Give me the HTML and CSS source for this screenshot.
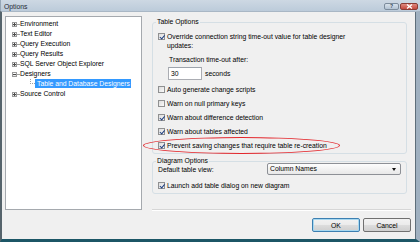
FILE: index.html
```html
<html lang="en">
<head>
  <meta charset="UTF-8" />
  <title>Options</title>
  <link rel="stylesheet" href="styles.css">
</head>
<body>
  <div class="window">
    <div class="titlebar">
      <span class="title">Options</span>
      <div class="caption">
        <span class="cap-btn cap-help">?</span>
        <span class="cap-btn cap-close">
          <svg width="7" height="5" viewBox="0 0 7 5"><path d="M1 0.5 L6 4.5 M6 0.5 L1 4.5" stroke="#fff" stroke-width="1.3"/></svg>
        </span>
      </div>
    </div>

    <div class="client">
      <!-- left tree -->
      <div class="tree">
        <div class="node"><span class="exp plus"></span><span class="dots"></span><span class="label">Environment</span></div>
        <div class="node"><span class="exp plus"></span><span class="dots"></span><span class="label">Text Editor</span></div>
        <div class="node"><span class="exp plus"></span><span class="dots"></span><span class="label">Query Execution</span></div>
        <div class="node"><span class="exp plus"></span><span class="dots"></span><span class="label">Query Results</span></div>
        <div class="node"><span class="exp plus"></span><span class="dots"></span><span class="label">SQL Server Object Explorer</span></div>
        <div class="node"><span class="exp"></span><span class="dots"></span><span class="label">Designers</span></div>
        <div class="node child"><span class="branch"></span><span class="label selected">Table and Database Designers</span></div>
        <div class="node"><span class="exp plus"></span><span class="dots"></span><span class="label">Source Control</span></div>
      </div>

      <!-- right options pane -->
      <div class="pane">
        <fieldset class="group table-opts">
          <legend>Table Options</legend>
          <div class="cb-row wrap"><span class="cb on"></span><span>Override connection string time-out value for table designer<br>updates:</span></div>
          <div class="sub-label">Transaction time-out after:</div>
          <div class="timeout-row"><span class="textbox">30</span><span class="unit">seconds</span></div>
          <div class="cb-row first"><span class="cb"></span><span>Auto generate change scripts</span></div>
          <div class="cb-row"><span class="cb"></span><span>Warn on null primary keys</span></div>
          <div class="cb-row"><span class="cb on"></span><span>Warn about difference detection</span></div>
          <div class="cb-row"><span class="cb on"></span><span>Warn about tables affected</span></div>
          <div class="cb-row"><span class="cb on"></span><span>Prevent saving changes that require table re-creation</span></div>
        </fieldset>

        <fieldset class="group diagram-opts">
          <legend>Diagram Options</legend>
          <div class="view-row">
            <span class="view-label">Default table view:</span>
            <span class="combo">Column Names<span class="arrow"></span></span>
          </div>
          <div class="cb-row launch"><span class="cb on"></span><span>Launch add table dialog on new diagram</span></div>
        </fieldset>

        <div class="separator"></div>

        <div class="buttons">
          <button type="button" class="btn default">OK</button>
          <button type="button" class="btn">Cancel</button>
        </div>

        <div class="highlight-ring"></div>
      </div>
    </div>
  </div>
</body>
</html>
```

FILE: styles.css
```css
body {
  margin: 0;
  padding: 0;
  font-family: 'Liberation Sans', Arial, sans-serif;
  font-size: 6.8px;
  color: #000;
  background-color: #fff;
}

.window {
  width: 420px;
  height: 242px;
  display: flex;
  flex-direction: column;
  overflow: hidden;
}

.titlebar {
  height: 11px;
  flex: none;
  display: flex;
  align-items: flex-start;
  background: linear-gradient(#cdd8e3, #bccbda);
  border-left: 1px solid #97a7b7;
}

.title {
  margin-left: 3px;
  line-height: 13px;
  color: #1e2a36;
}

.caption {
  margin-left: auto;
  margin-top: 3px;
  margin-right: 2px;
  display: flex;
  gap: 1px;
}

.cap-btn {
  height: 7px;
  border: 1px solid #7c8c9c;
  border-radius: 2px;
  box-sizing: border-box;
  display: flex;
  align-items: center;
  justify-content: center;
  font-size: 5px;
  font-weight: bold;
  line-height: 5px;
}

.cap-help {
  width: 15px;
  color: #2e3e4e;
  background: linear-gradient(#d8e2ec, #b3c3d3);
}

.cap-close {
  width: 18px;
  border-color: #8a3c36;
  background: linear-gradient(#e08a80, #c4483e);
}

.client {
  flex: 1;
  display: flex;
  align-items: flex-start;
  background-color: #f0f0f0;
  border-top: 1px solid #a9b7c5;
  border-left: 2px solid #56646c;
  border-right: 4px solid #9fb0c0;
  border-bottom: 3px solid #1c5666;
  padding-left: 3px;
  box-shadow: inset -1px 0 0 #5e6e7a;
}

/* tree */

.tree {
  width: 137px;
  height: 194px;
  margin-top: 4px;
  box-sizing: border-box;
  background-color: #fff;
  border: 1px solid #a5a9ae;
  padding-top: 2px;
  padding-left: 6px;
}

.node {
  height: 10px;
  display: flex;
  align-items: center;
  white-space: nowrap;
}

.exp {
  width: 5px;
  height: 5px;
  box-sizing: border-box;
  border: 1px solid #9a9a9a;
  background: linear-gradient(#ffffff, #e4e4e4);
  position: relative;
}

.exp::before {
  content: "";
  position: absolute;
  left: 0;
  top: 1px;
  width: 3px;
  height: 1px;
  background-color: #4a4a4a;
}

.exp.plus::after {
  content: "";
  position: absolute;
  left: 1px;
  top: 0;
  width: 1px;
  height: 3px;
  background-color: #4a4a4a;
}

.dots {
  width: 2px;
  height: 0;
  border-top: 1px dotted #a0a0a0;
  margin-right: 1px;
}

.label {
  line-height: 10px;
}

.child {
  padding-left: 18px;
  align-items: stretch;
}

.branch {
  width: 5px;
  height: 5px;
  box-sizing: border-box;
  border-left: 1px dotted #a0a0a0;
  border-bottom: 1px dotted #a0a0a0;
}

.selected {
  background-color: #3399ff;
  color: #fff;
  padding: 0 1px 0 2px;
  line-height: 9px;
  margin-top: 0;
  height: 9px;
}

/* options pane */

.pane {
  width: 260px;
  height: 221px;
  margin-top: 6px;
  margin-left: 10px;
  display: flex;
  flex-direction: column;
  position: relative;
}

.group {
  width: 255px;
  min-width: 0;
  margin: 0;
  box-sizing: border-box;
  border: 1px solid #d5dfe5;
  border-radius: 3px;
  padding: 0 5px 1px 5px;
}

.group legend {
  padding: 0 1px;
  margin-left: -2px;
  line-height: 8px;
  color: #000;
}

.cb-row {
  height: 14px;
  display: flex;
  align-items: center;
  white-space: nowrap;
}

.cb {
  width: 7px;
  height: 7px;
  flex: none;
  box-sizing: border-box;
  border: 1px solid #8f9091;
  background: linear-gradient(135deg, #dcdcdc, #fafafa);
  margin-right: 2px;
  position: relative;
}

.cb.on::after {
  content: "";
  position: absolute;
  left: 1.5px;
  top: 0;
  width: 1.5px;
  height: 3.5px;
  border-right: 1.2px solid #1f3f80;
  border-bottom: 1.2px solid #1f3f80;
  transform: rotate(40deg);
}

.cb-row.wrap {
  height: auto;
  margin-top: 6px;
  align-items: flex-start;
  line-height: 9px;
}

.cb-row.wrap .cb {
  margin-top: 1px;
}

.sub-label {
  margin-top: 5px;
  padding-left: 11px;
  line-height: 9px;
}

.timeout-row {
  margin-top: 3px;
  padding-left: 10px;
  height: 13px;
  display: flex;
  align-items: center;
}

.textbox {
  width: 34px;
  height: 13px;
  box-sizing: border-box;
  border: 1px solid #abadb3;
  border-top-color: #9ea4ac;
  background-color: #fff;
  padding-left: 2px;
  line-height: 11px;
}

.unit {
  margin-left: 3px;
}

.cb-row.first {
  margin-top: 2px;
}

.diagram-opts {
  margin-top: 4px;
}

.diagram-opts legend {
  line-height: 6px;
}

.view-row {
  margin-top: -1px;
  height: 12px;
  display: flex;
  align-items: center;
}

.view-label {
  flex: 1;
}

.combo {
  width: 134px;
  height: 12px;
  box-sizing: border-box;
  border: 1px solid #8d9096;
  border-radius: 2px;
  background: linear-gradient(#fdfdfd, #e8e8e8);
  padding-left: 2px;
  line-height: 10px;
  position: relative;
}

.arrow {
  position: absolute;
  right: 4px;
  top: 4px;
  width: 0;
  height: 0;
  border-left: 2.5px solid transparent;
  border-right: 2.5px solid transparent;
  border-top: 3px solid #111;
}

.cb-row.launch {
  margin-top: 3px;
}

.separator {
  width: 259px;
  height: 1px;
  margin-top: 15px;
  background-color: #d6d6d6;
  border-bottom: 1px solid #fff;
}

.buttons {
  width: 259px;
  margin-top: 7px;
  display: flex;
  justify-content: flex-end;
  gap: 3px;
}

.btn {
  width: 48px;
  height: 14px;
  box-sizing: border-box;
  border: 1px solid #707070;
  border-radius: 2px;
  background: linear-gradient(#f2f2f2 0%, #ebebeb 50%, #dddddd 51%, #cfcfcf 100%);
  font-family: inherit;
  font-size: 6.8px;
  color: #000;
  padding: 0;
}

.btn.default {
  border-color: #3c7fb1;
  box-shadow: inset 0 0 0 1px #a8d8f0;
}

.highlight-ring {
  position: absolute;
  left: -9px;
  top: 119px;
  width: 197px;
  height: 17px;
  box-sizing: border-box;
  border: 1.5px solid #e3262b;
  border-radius: 50%;
}
```
